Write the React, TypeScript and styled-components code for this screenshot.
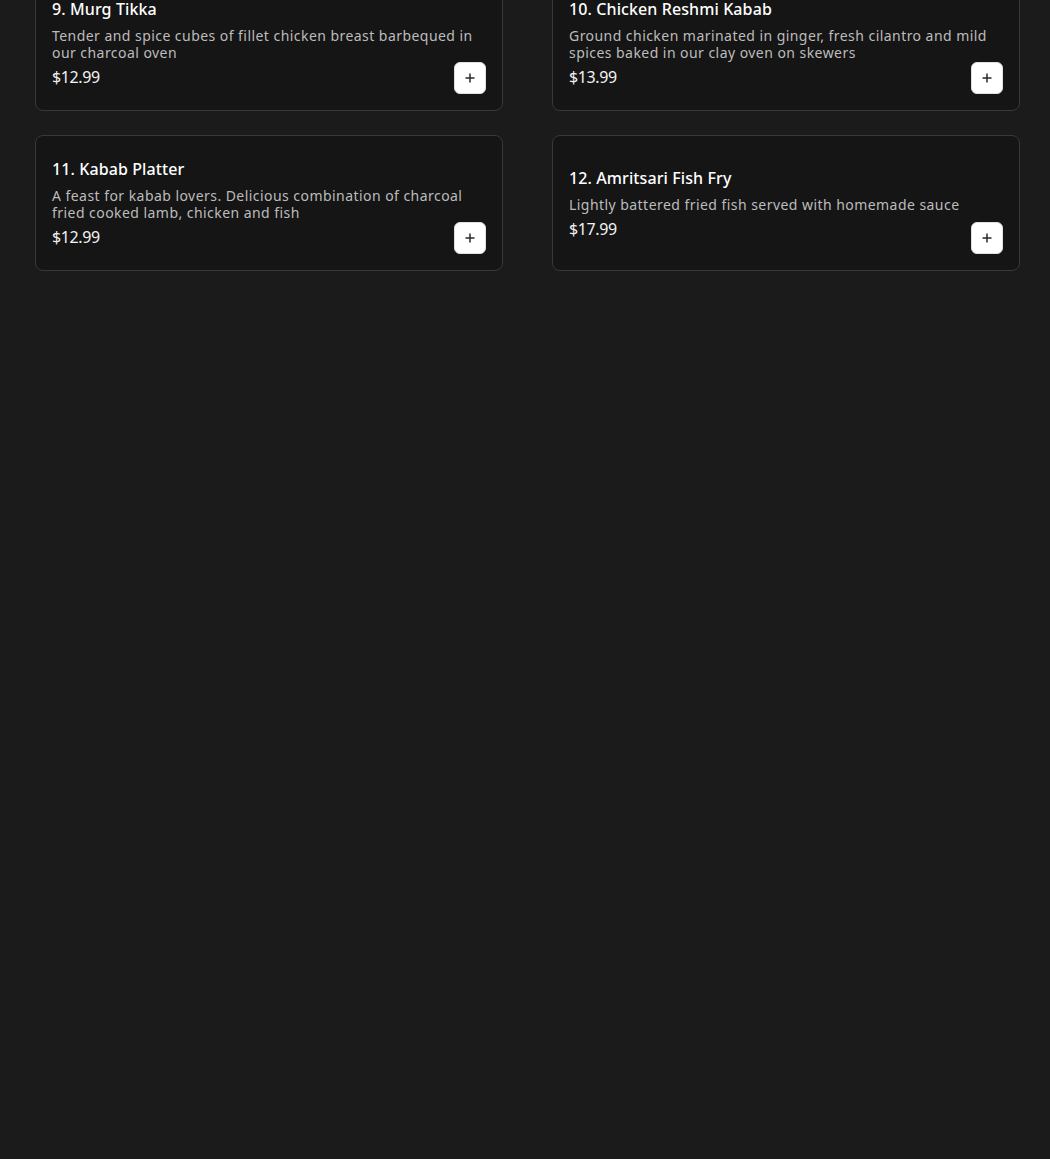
import { FC } from 'react';
import styled, { createGlobalStyle } from 'styled-components';

interface MenuItem {
    id: number;
    name: string;
    description: string;
    price: string;
}

const items: MenuItem[] = [
    {
        id: 9,
        name: 'Murg Tikka',
        description: 'Tender and spice cubes of fillet chicken breast barbequed in our charcoal oven',
        price: '$12.99',
    },
    {
        id: 10,
        name: 'Chicken Reshmi Kabab',
        description: 'Ground chicken marinated in ginger, fresh cilantro and mild spices baked in our clay oven on skewers',
        price: '$13.99',
    },
    {
        id: 11,
        name: 'Kabab Platter',
        description: 'A feast for kabab lovers. Delicious combination of charcoal fried cooked lamb, chicken and fish',
        price: '$12.99',
    },
    {
        id: 12,
        name: 'Amritsari Fish Fry',
        description: 'Lightly battered fried fish served with homemade sauce',
        price: '$17.99',
    },
];

const GlobalStyle = createGlobalStyle`
    html, body {
        margin: 0;
        padding: 0;
        background-color: #1b1b1b;
        font-family: 'Noto Sans', 'DejaVu Sans', sans-serif;
        overflow: hidden;
    }
    #root {
        min-height: 1159px;
    }
`;

const Grid = styled.div`
    display: grid;
    grid-template-columns: repeat(2, 468px);
    column-gap: 49px;
    row-gap: 24px;
    padding: 0 35px;
    margin-top: -25px;
`;

const Card = styled.div`
    box-sizing: border-box;
    min-height: 136px;
    display: grid;
    padding: 16px;
    background-color: #151515;
    border: 1px solid #383838;
    border-radius: 8px;
`;

const Info = styled.div`
    grid-area: 1 / 1;
    align-self: center;
    display: flex;
    flex-direction: column;
    .title {
        color: #ffffff;
        font-size: 16px;
        font-weight: 500;
        line-height: 20px;
        letter-spacing: 0.1px;
    }
    .description {
        margin-top: 8px;
        color: #bcbcbc;
        font-size: 14px;
        font-weight: 400;
        line-height: 17px;
        letter-spacing: 0.45px;
    }
    .price {
        margin-top: 6px;
        color: #f2f2f2;
        font-size: 16px;
        line-height: 20px;
        letter-spacing: -0.4px;
    }
`;

const AddButton = styled.button`
    grid-area: 1 / 1;
    align-self: end;
    justify-self: end;
    width: 32px;
    height: 32px;
    padding: 0;
    display: flex;
    align-items: center;
    justify-content: center;
    background-color: #ffffff;
    border: 1px solid #e0e0e0;
    border-radius: 6px;
    cursor: pointer;
`;

const PlusIcon: FC = () => (
    <svg width="10" height="10" viewBox="0 0 10 10" fill="none">
        <path d="M5 0.5v9M0.5 5h9" stroke="#2a2a2a" strokeWidth="1.5" />
    </svg>
);

const MenuCard: FC<{ item: MenuItem }> = ({ item }) => (
    <Card>
        <Info>
            <div className="title">
                {item.id}. {item.name}
            </div>
            <div className="description">{item.description}</div>
            <div className="price">{item.price}</div>
        </Info>
        <AddButton aria-label={`Add ${item.name}`}>
            <PlusIcon />
        </AddButton>
    </Card>
);

const App: FC = () => (
    <>
        <GlobalStyle />
        <Grid>
            {items.map((item) => (
                <MenuCard key={item.id} item={item} />
            ))}
        </Grid>
    </>
);

export default App;
